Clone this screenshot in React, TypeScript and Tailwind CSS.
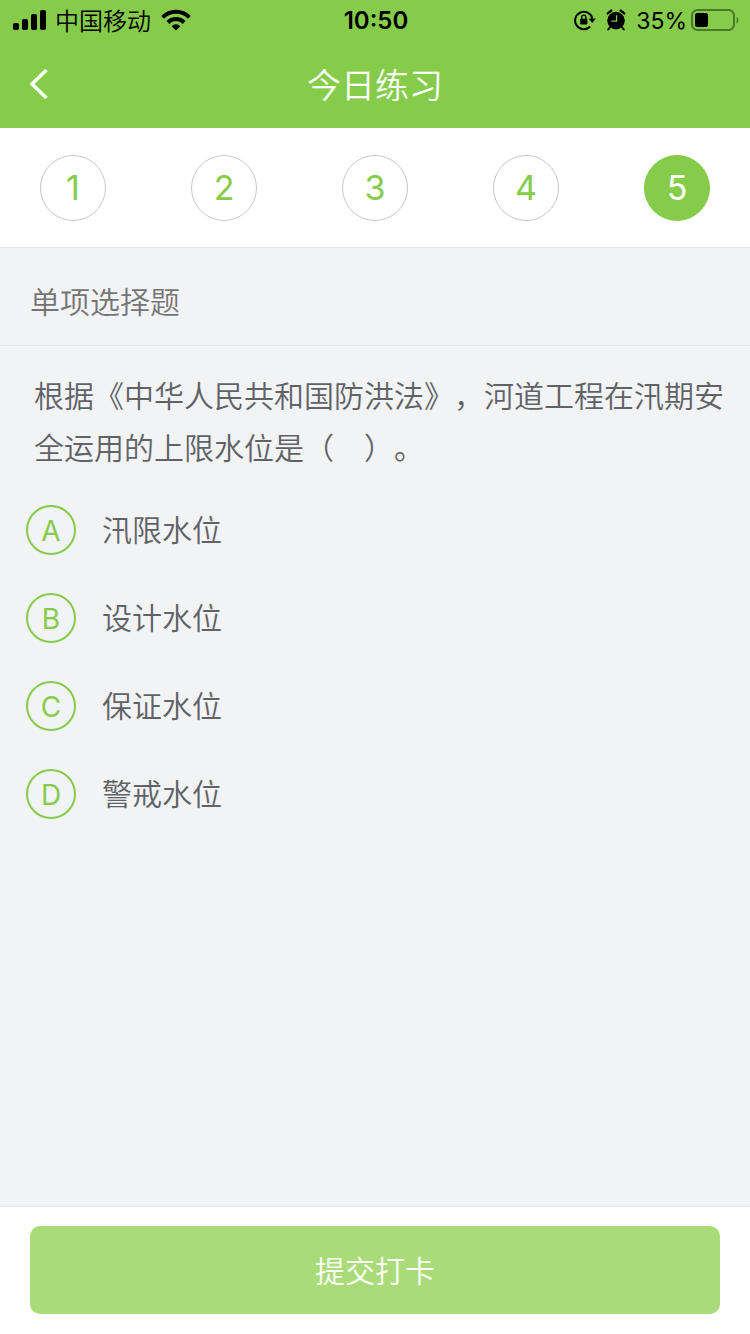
import { useState } from "react";
import { clsx } from "clsx";

const steps = [1, 2, 3, 4, 5];

const options = [
  { key: "A", text: "汛限水位" },
  { key: "B", text: "设计水位" },
  { key: "C", text: "保证水位" },
  { key: "D", text: "警戒水位" },
];

const SignalIcon = () => (
  <svg className="w-[34px] h-[22px]" viewBox="0 0 34 22" fill="currentColor">
    <rect x="0" y="14" width="6" height="7" rx="1.8" />
    <rect x="9" y="10" width="6" height="11" rx="1.8" />
    <rect x="18" y="5" width="6" height="16" rx="1.8" />
    <rect x="27" y="1" width="6" height="20" rx="1.8" />
  </svg>
);

const WifiIcon = () => (
  <svg className="w-[30px] h-[22px]" viewBox="0 0 30 22" fill="none" stroke="currentColor" strokeWidth="4">
    <path d="M1.6 8.3a19 19 0 0 1 26.8 0" />
    <path d="M6.8 13.5a11.6 11.6 0 0 1 16.4 0" />
    <path d="M15 21.6l-4.4-4.4a6.2 6.2 0 0 1 8.8 0z" fill="currentColor" stroke="none" />
  </svg>
);

const RotationLockIcon = () => (
  <svg className="w-[22px] h-[22px]" viewBox="0 0 22 22" fill="none" stroke="currentColor" strokeWidth="2">
    <path d="M16.2 17.5A8.7 8.7 0 1 1 18.3 9.5" />
    <path d="M14.6 9.4h7.2l-3.6 4.6z" fill="currentColor" stroke="none" />
    <rect x="6.2" y="9.8" width="7.2" height="5.6" rx="0.8" fill="currentColor" stroke="none" />
    <path d="M7.8 10V8.1a2 2 0 0 1 4 0V10" strokeWidth="1.4" />
  </svg>
);

const AlarmIcon = () => (
  <svg className="w-5 h-[22px]" viewBox="0 0 20 22" fill="none" stroke="currentColor">
    <circle cx="10" cy="11.6" r="8.8" fill="currentColor" stroke="none" />
    <path d="M1.8 4.4l3.4-2.8M18.2 4.4l-3.4-2.8" strokeWidth="2.4" strokeLinecap="round" />
    <path d="M4.2 18.2l-2 2.2M15.8 18.2l2 2.2" strokeWidth="2" strokeLinecap="round" />
    <path d="M10.6 6.2v6H5.4" stroke="#86cc4b" strokeWidth="1.2" />
  </svg>
);

const BatteryIcon = () => (
  <svg className="w-12 h-6" viewBox="0 0 48 24" fill="none">
    <rect x="1" y="2" width="42" height="20" rx="5.5" stroke="#000" strokeOpacity="0.42" strokeWidth="2" />
    <rect x="4" y="5" width="13" height="14" rx="2.5" fill="#000" />
    <path d="M45.6 9v6.6c1.2-.6 1.8-1.8 1.8-3.3s-.6-2.7-1.8-3.3z" fill="#000" fillOpacity="0.42" />
  </svg>
);

const StatusBar = () => (
  <div className="grid grid-cols-[1fr_auto_1fr] items-center h-10 pl-[13px] pr-[11px] text-2xl text-black">
    <div className="flex items-center gap-2">
      <SignalIcon />
      <span className="pt-[3px] font-[350]">中国移动</span>
      <span className="pl-[2px]">
        <WifiIcon />
      </span>
    </div>
    <span className="pt-[2px] font-semibold">10:50</span>
    <div className="flex items-center justify-end gap-1">
      <RotationLockIcon />
      <span className="px-[6px]">
        <AlarmIcon />
      </span>
      <span className="pt-[2px] text-[23px]">35%</span>
      <BatteryIcon />
    </div>
  </div>
);

export default function App() {
  const [step, setStep] = useState(5);
  const [answer, setAnswer] = useState("");

  return (
    <div className="min-h-screen flex flex-col bg-[#f2f3f5] font-['Inter','Noto_Sans_CJK_SC',sans-serif]">
      <header className="bg-[#86cc4b]">
        <StatusBar />
        <div className="grid grid-cols-[1fr_auto_1fr] items-center h-[88px] px-7 text-white">
          <button type="button" aria-label="返回" className="w-6 cursor-pointer">
            <svg className="w-6 h-8" viewBox="0 0 24 32" fill="none" stroke="currentColor" strokeWidth="3.4">
              <path d="M18.5 2L4 16l14.5 14" />
            </svg>
          </button>
          <h1 className="pt-[2px] text-[34px] font-[350]">今日练习</h1>
        </div>
      </header>

      <nav className="flex justify-between items-center h-[120px] px-10 bg-white border-b border-[#e5e5e5]">
        {steps.map((n) => (
          <button
            key={n}
            type="button"
            onClick={() => setStep(n)}
            className={clsx(
              "w-[66px] h-[66px] rounded-full border text-[34px] cursor-pointer",
              n === step
                ? "bg-[#86cc4b] border-[#86cc4b] text-white"
                : "bg-white border-[#c8c8c8] text-[#86cc4b]"
            )}
          >
            {n}
          </button>
        ))}
      </nav>

      <main className="flex-1">
        <h2 className="flex items-center h-[98px] px-[30px] pt-3 border-b border-[#e6e8ea] text-[30px] font-[350] text-[#757575]">
          单项选择题
        </h2>
        <fieldset className="pt-6 text-[30px] font-[350] text-[#606266]">
          <legend className="contents">
            <p className="pl-[34px] pr-5 leading-[52px] [text-spacing-trim:space-all]">
              根据《中华人民共和国防洪法》，河道工程在汛期安全运用的上限水位是（　）。
            </p>
          </legend>
          <div className="pt-3">
            {options.map((item) => (
              <label key={item.key} className="flex items-center gap-[26px] h-[88px] px-[26px] cursor-pointer">
                <input
                  type="radio"
                  name="answer"
                  value={item.key}
                  checked={answer === item.key}
                  onChange={() => setAnswer(item.key)}
                  className="sr-only peer"
                />
                <span className="flex items-center justify-center w-[50px] h-[50px] pt-[2px] rounded-full border-2 border-[#86cc4b] text-[28px] font-normal text-[#86cc4b] peer-checked:bg-[#86cc4b] peer-checked:text-white">
                  {item.key}
                </span>
                <span>{item.text}</span>
              </label>
            ))}
          </div>
        </fieldset>
      </main>

      <footer className="px-[30px] pt-[19px] pb-5 bg-white border-t border-[#e5e5e5]">
        <button
          type="button"
          className="w-full h-[88px] pt-[2px] rounded-[10px] bg-[#a9dc79] text-[30px] font-[350] text-white cursor-pointer"
        >
          提交打卡
        </button>
      </footer>
    </div>
  );
}
